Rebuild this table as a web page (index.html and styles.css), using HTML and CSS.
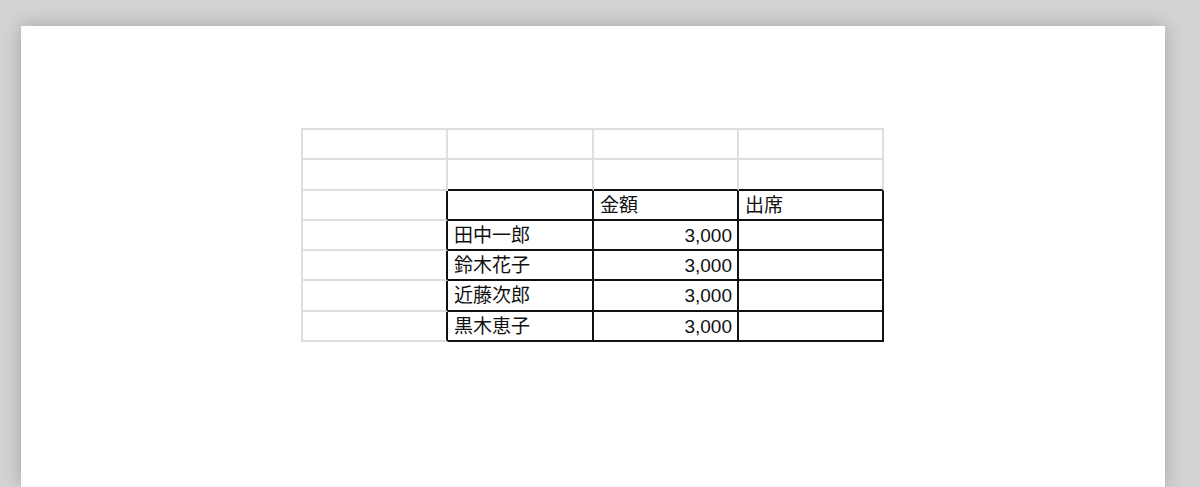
FILE: index.html
```html
<!DOCTYPE html>
<html lang="ja">
<head>
<meta charset="utf-8">
<title>Sheet</title>
<link rel="stylesheet" href="styles.css">
</head>
<body>
<div class="page">
  <div class="sheet">
    <div class="cell"></div><div class="cell"></div><div class="cell"></div><div class="cell"></div>
    <div class="cell"></div><div class="cell bb"></div><div class="cell bb"></div><div class="cell bb"></div>
    <div class="cell br"></div><div class="cell b"></div><div class="cell b">金額</div><div class="cell b">出席</div>
    <div class="cell br"></div><div class="cell b">田中一郎</div><div class="cell b num">3,000</div><div class="cell b"></div>
    <div class="cell br"></div><div class="cell b">鈴木花子</div><div class="cell b num">3,000</div><div class="cell b"></div>
    <div class="cell br"></div><div class="cell b">近藤次郎</div><div class="cell b num">3,000</div><div class="cell b"></div>
    <div class="cell br"></div><div class="cell b">黒木恵子</div><div class="cell b num">3,000</div><div class="cell b"></div>
  </div>
</div>
</body>
</html>
```

FILE: styles.css
```css
html, body {
  margin: 0;
  height: 100%;
  overflow: hidden;
}
body {
  background: #d3d3d3;
  padding: 26px 0 0 21px;
  box-sizing: border-box;
  font-family: "Liberation Sans", "Noto Sans CJK JP", sans-serif;
}
.page {
  width: 1144px;
  height: 461px;
  background: #ffffff;
  box-shadow: 0 0 18px rgba(0, 0, 0, 0.22);
  padding: 102px 0 0 280px;
  box-sizing: border-box;
}
.sheet {
  display: grid;
  grid-template-columns: 145px 146px 145px 145px;
  grid-auto-rows: 30.3px;
  width: max-content;
  border-top: 2px solid #dedede;
  border-left: 2px solid #dedede;
}
.cell {
  box-sizing: border-box;
  border-right: 2px solid #dedede;
  border-bottom: 2px solid #dedede;
  padding: 0 5px 0 6px;
  font-size: 19px;
  line-height: 30px;
  color: #111;
  white-space: nowrap;
  overflow: hidden;
}
.cell.bb {
  border-bottom-color: #111;
}
.cell.br {
  border-right-color: #111;
}
.cell.b {
  border-right-color: #111;
  border-bottom-color: #111;
}
.cell.num {
  text-align: right;
}
```
